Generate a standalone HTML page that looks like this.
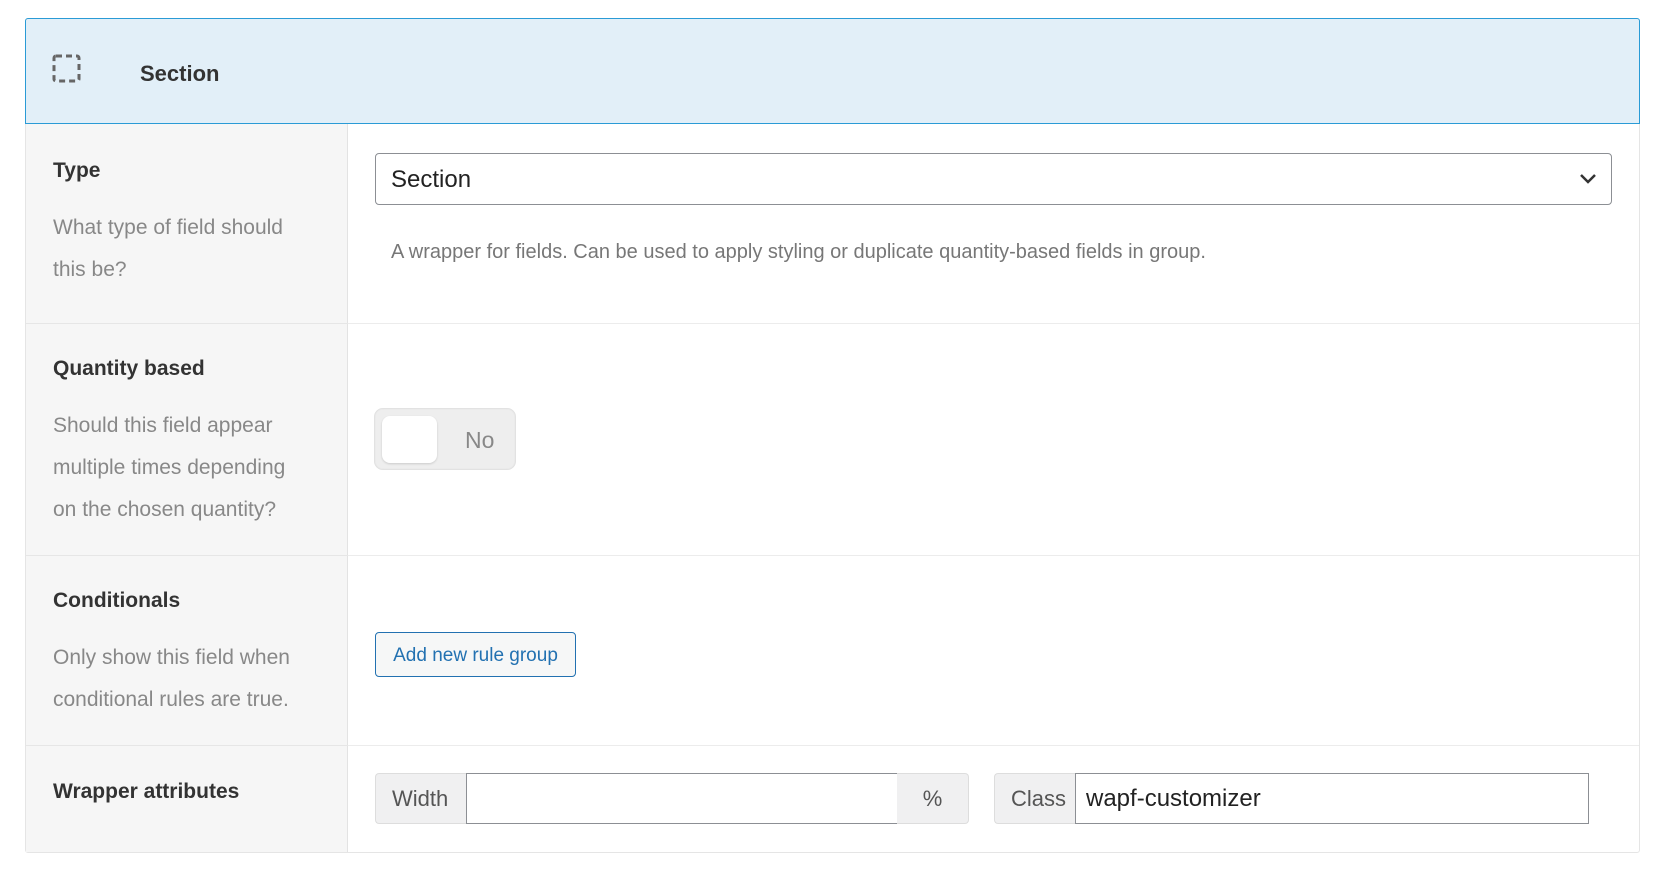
<!DOCTYPE html>
<html><head><style>
*{box-sizing:border-box;margin:0;padding:0}
body{width:1661px;height:873px;background:#fff;font-family:"Liberation Sans",sans-serif;position:relative;overflow:hidden}
.abs{position:absolute}
.wrap{position:absolute;left:25px;top:18px;width:1615px;height:835px;border:1px solid #e5e5e5;border-radius:3px}
.hdr{position:absolute;left:25px;top:18px;width:1615px;height:106px;background:#e2eff8;border:1.5px solid #2a9bd6;border-radius:3px 3px 0 0}
.left{position:absolute;left:26px;top:124px;width:322px;height:728px;background:#f6f6f6;border-right:1px solid #e3e3e3}
.hl{position:absolute;left:348px;height:1px;width:1291px;background:#ececec}
.hl2{position:absolute;left:26px;height:1px;width:322px;background:#e6e6e6}
.lab{position:absolute;left:53px;font-size:21px;font-weight:bold;color:#333}
.desc{position:absolute;left:53px;font-size:21px;line-height:42px;color:#888;width:248px}
</style></head><body>
<div class="wrap"></div>
<div class="hdr"></div>
<svg class="abs" style="left:52px;top:54px" width="30" height="30" viewBox="0 0 30 30"><rect x="2" y="2" width="25" height="25" rx="2" fill="none" stroke="#666" stroke-width="3" stroke-dasharray="6 4"/></svg>
<div class="abs" style="left:140px;top:61px;font-size:22px;font-weight:bold;color:#333">Section</div>
<div class="left"></div>
<div class="hl" style="top:323px"></div><div class="hl2" style="top:323px"></div>
<div class="hl" style="top:555px"></div><div class="hl2" style="top:555px"></div>
<div class="hl" style="top:745px"></div><div class="hl2" style="top:745px"></div>

<div class="lab" style="top:159px">Type</div>
<div class="desc" style="top:207px">What type of field should this be?</div>
<div class="abs" style="left:375px;top:153px;width:1237px;height:52px;border:1px solid #8c8f94;border-radius:4px"></div>
<div class="abs" style="left:391px;top:166px;font-size:24px;color:#222">Section</div>
<svg class="abs" style="left:1578px;top:172px" width="20" height="14" viewBox="0 0 20 14"><path d="M3 3l7 7 7-7" fill="none" stroke="#333" stroke-width="2.5"/></svg>
<div class="abs" style="left:391px;top:241px;font-size:20px;color:#777">A wrapper for fields. Can be used to apply styling or duplicate quantity-based fields in group.</div>

<div class="lab" style="top:357px">Quantity based</div>
<div class="desc" style="top:405px">Should this field appear multiple times depending on the chosen quantity?</div>
<div class="abs" style="left:374px;top:408px;width:142px;height:62px;background:#eee;border-radius:9px;box-shadow:inset 0 0 2px rgba(0,0,0,.15)"></div>
<div class="abs" style="left:382px;top:416px;width:55px;height:47px;background:#fff;border-radius:8px;box-shadow:0 1px 2px rgba(0,0,0,.15)"></div>
<div class="abs" style="left:465px;top:427px;font-size:23px;color:#888">No</div>

<div class="lab" style="top:589px">Conditionals</div>
<div class="desc" style="top:637px">Only show this field when conditional rules are true.</div>
<div class="abs" style="left:375px;top:632px;width:201px;height:45px;border:1px solid #2271b1;border-radius:4px;background:#f6f7f7;color:#2271b1;font-size:19px;text-align:center;line-height:45px">Add new rule group</div>

<div class="lab" style="top:780px">Wrapper attributes</div>
<div class="abs" style="left:375px;top:773px;width:92px;height:51px;background:#f0f0f1;border:1px solid #ddd;border-right:none;border-radius:4px 0 0 4px;font-size:22px;color:#555;line-height:49px;padding-left:16px">Width</div>
<div class="abs" style="left:466px;top:773px;width:432px;height:51px;border:1px solid #8c8f94"></div>
<div class="abs" style="left:897px;top:773px;width:72px;height:51px;background:#f0f0f1;border:1px solid #ddd;border-left:none;border-radius:0 4px 4px 0;font-size:22px;color:#555;line-height:49px;text-align:center">%</div>
<div class="abs" style="left:994px;top:773px;width:82px;height:51px;background:#f0f0f1;border:1px solid #ddd;border-right:none;border-radius:4px 0 0 4px;font-size:22px;color:#555;line-height:49px;padding-left:16px">Class</div>
<div class="abs" style="left:1075px;top:773px;width:514px;height:51px;border:1px solid #8c8f94;font-size:24px;color:#222;line-height:49px;padding-left:10px">wapf-customizer</div>
</body></html>
